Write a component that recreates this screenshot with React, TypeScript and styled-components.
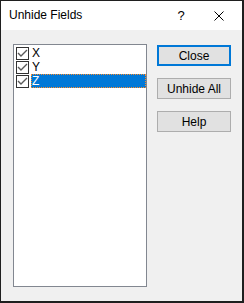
import React from "react";
import styled, { createGlobalStyle } from "styled-components";

const Global = createGlobalStyle`
  html, body { margin: 0; padding: 0; background: #f0f0f0; }
  body { font-family: "Liberation Sans", Arial, sans-serif; font-size: 12px; }
`;

const Window = styled.div`
  width: 244px;
  height: 303px;
  box-sizing: border-box;
  border-style: solid;
  border-color: #1f1f1f;
  border-width: 1px 2px 2px 1px;
  display: flex;
  flex-direction: column;
  background: #f0f0f0;
`;

const TitleBar = styled.div`
  height: 29px;
  background: #ffffff;
  display: flex;
  align-items: center;
  padding-left: 8px;
  color: #000;
  font-size: 12px;
`;

const Title = styled.div`
  flex: 1;
  padding-bottom: 1px;
`;

const TitleButton = styled.div<{ $w: number }>`
  width: ${(p) => p.$w}px;
  height: 29px;
  display: flex;
  align-items: center;
  justify-content: center;
  font-size: 13px;
`;

const Body = styled.div`
  flex: 1;
  display: flex;
  gap: 10px;
  padding: 14px 11px 14px 12px;
`;

const List = styled.div`
  width: 134px;
  box-sizing: border-box;
  border: 1px solid #828790;
  background: #ffffff;
  padding: 1px 0 0 2px;
`;

const Row = styled.div`
  height: 14px;
  display: flex;
  align-items: center;
`;

const Box = styled.div`
  width: 13px;
  height: 13px;
  box-sizing: border-box;
  border: 1px solid #333333;
  background: #fff;
  display: flex;
  align-items: center;
  justify-content: center;
  margin-right: 2px;
  flex-shrink: 0;
`;

const Label = styled.div<{ $selected?: boolean }>`
  flex: 1;
  height: 14px;
  line-height: 14px;
  padding-left: 1px;
  box-sizing: border-box;
  color: ${(p) => (p.$selected ? "#ffffff" : "#000000")};
  background: ${(p) => (p.$selected ? "#0078d7" : "transparent")};
  outline: ${(p) => (p.$selected ? "1px dotted #ff8c28" : "none")};
  outline-offset: -1px;
`;

const Buttons = styled.div`
  display: flex;
  flex-direction: column;
  gap: 12px;
  padding-top: 1px;
`;

const Button = styled.button<{ $default?: boolean }>`
  width: 74px;
  height: 21px;
  box-sizing: border-box;
  background: #e1e1e1;
  border: ${(p) => (p.$default ? "2px solid #0078d7" : "1px solid #adadad")};
  font-family: "Liberation Sans", Arial, sans-serif;
  font-size: 12px;
  color: #000;
  padding: 0;
  display: flex;
  align-items: center;
  justify-content: center;
`;

const Check = () => (
  <svg width="11" height="11" viewBox="0 0 11 11">
    <polyline
      points="1,5 4,8 10,2"
      fill="none"
      stroke="#5a5a5a"
      strokeWidth="1.4"
    />
  </svg>
);

const items = ["X", "Y", "Z"];

export default function App() {
  return (
    <>
      <Global />
      <Window>
        <TitleBar>
          <Title>Unhide Fields</Title>
          <TitleButton $w={30}>?</TitleButton>
          <TitleButton $w={46}>
            <svg width="10" height="10" viewBox="0 0 10 10">
              <path d="M0.5 0.5 L9.5 9.5 M9.5 0.5 L0.5 9.5" stroke="#000" strokeWidth="1" />
            </svg>
          </TitleButton>
        </TitleBar>
        <Body>
          <List>
            {items.map((it, i) => (
              <Row key={it}>
                <Box>
                  <Check />
                </Box>
                <Label $selected={i === 2}>{it}</Label>
              </Row>
            ))}
          </List>
          <Buttons>
            <Button $default>Close</Button>
            <Button>Unhide All</Button>
            <Button>Help</Button>
          </Buttons>
        </Body>
      </Window>
    </>
  );
}
